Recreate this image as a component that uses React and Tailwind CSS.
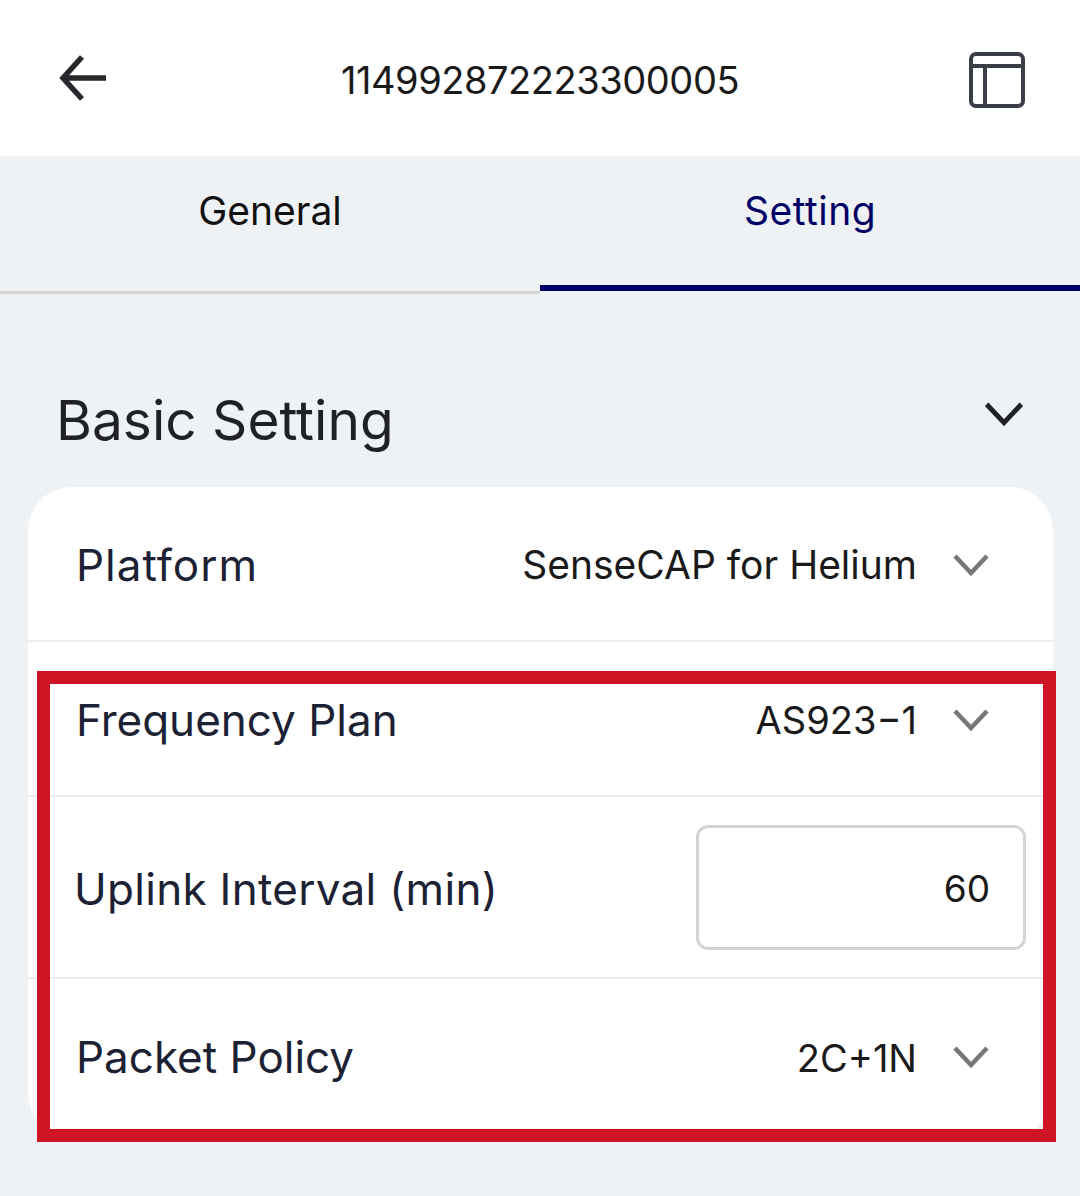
import React from "react"

const Chevron = ({ className }) => (
    <svg viewBox="0 0 36 24" className={className} fill="none" stroke="currentColor" strokeWidth="4.5">
        <path d="M2 3 L18 20 L34 3" />
    </svg>
)

const SelectRow = ({ label, value, rowClass, labelClass, valueClass }) => (
    <div className={`flex items-center justify-between pl-[48px] pr-[64px] ${rowClass}`}>
        <span className={`text-[44px] text-[#1c2233] ${labelClass}`}>{label}</span>
        <div className="flex items-center gap-[36px]">
            <span className={`text-[#1a1a1a] mt-[2px] ${valueClass}`}>{value}</span>
            <Chevron className="w-[36px] h-[24px] text-[#777777]" />
        </div>
    </div>
)

const App = () => {
    return (
        <div className="relative w-[1080px] h-[1196px] overflow-hidden bg-[#eff2f5] font-['Inter',sans-serif]">
            {/* Header */}
            <div className="h-[156px] bg-white flex items-center justify-between pl-[59px] pr-[55px]">
                <svg viewBox="0 0 48 48" className="w-[48px] h-[48px] text-[#26282c]" fill="none" stroke="currentColor" strokeWidth="5.5">
                    <path d="M23 3 L4 24 L23 45 M4 24 H47" />
                </svg>
                <span className="text-[38px] tracking-[-0.45px] mt-[5px] ml-[4px] text-[#1a1a1a]">114992872223300005</span>
                <svg viewBox="0 0 56 56" className="w-[56px] h-[56px] mt-[3px] text-[#3a3f47]" fill="none" stroke="currentColor" strokeWidth="4">
                    <rect x="2" y="2" width="52" height="52" rx="5" />
                    <path d="M2 14 H54 M16 14 V54" />
                </svg>
            </div>

            {/* Tabs */}
            <div className="flex h-[138px]">
                <div className="w-1/2 flex items-start justify-center pt-[26px] border-b-[3px] border-[#d4d4d4]">
                    <span className="text-[39px] text-[#111111]">General</span>
                </div>
                <div className="w-1/2 flex items-start justify-center pt-[26px] border-b-[6px] border-[#000066] mb-[3px]">
                    <span className="text-[39px] tracking-[0.5px] text-[#000066]">Setting</span>
                </div>
            </div>

            {/* Section title */}
            <div className="flex items-start justify-between h-[193px] pt-[90px] pl-[56px] pr-[56px]">
                <span className="text-[55px] leading-[72px] text-[#1f2125]">Basic Setting</span>
                <Chevron className="w-[40px] h-[26px] mt-[17px] text-[#1f2125]" />
            </div>

            {/* Card */}
            <div className="mx-[28px] w-[1025px] bg-white rounded-[44px] overflow-hidden">
                <SelectRow label="Platform" labelClass="tracking-[1px]" value="SenseCAP for Helium" valueClass="text-[39px]" rowClass="h-[155px] pt-[2px] border-b-2 border-[#ebedef]" />
                <SelectRow label="Frequency Plan" value="AS923−1" valueClass="text-[38px]" rowClass="h-[155px] pt-[2px] border-b-2 border-[#ebedef]" />
                <div className="h-[182px] flex items-center justify-between pl-[46px] pr-[27px] pt-[2px] border-b-2 border-[#ebedef]">
                    <span className="text-[44px] tracking-[0.3px] mt-[2px] text-[#1c2233]">Uplink Interval (min)</span>
                    <div className="w-[330px] h-[125px] -mt-[2px] border-[3px] border-[#d4d4d4] rounded-[12px] flex items-center justify-end pr-[33px] pt-[3px]">
                        <span className="text-[37px] text-[#1a1a1a]">60</span>
                    </div>
                </div>
                <SelectRow label="Packet Policy" value="2C+1N" valueClass="text-[38px]" rowClass="h-[158px] pb-[2px]" />
            </div>

            {/* Red highlight drawn over the card */}
            <div className="absolute left-[37px] top-[671px] w-[1019px] h-[471px] border-[13px] border-[#cf1426]"></div>
        </div>
    )
}

export default App
